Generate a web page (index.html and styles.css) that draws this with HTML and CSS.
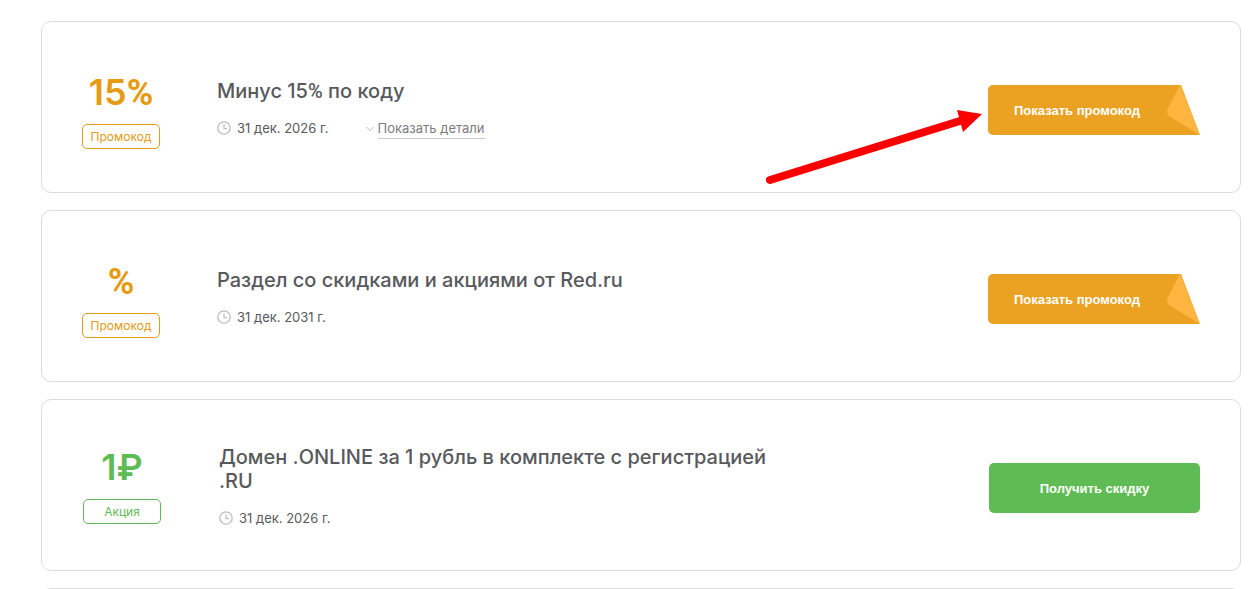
FILE: index.html
```html
<!DOCTYPE html>
<html lang="ru">
<head>
<meta charset="utf-8">
<title>Промокоды и акции</title>
<meta name="viewport" content="width=device-width, initial-scale=1">
<link rel="stylesheet" href="styles.css">
</head>
<body>
<svg class="sprite" aria-hidden="true">
  <symbol id="clock" viewBox="0 0 14 14">
    <circle cx="7" cy="7" r="6.2" fill="none" stroke="currentColor" stroke-width="1.3"/>
    <path d="M7 3.4V7.6H10" fill="none" stroke="currentColor" stroke-width="1.2"/>
  </symbol>
  <symbol id="fold" viewBox="0 0 34 50">
    <path d="M14 0 2 23Q-.5 28 3 31L34 50Z" fill="#ffb540"/>
  </symbol>
</svg>
<main class="offers">
  <article class="card">
    <div class="discount">
      <div class="amount">15<span class="percent">%</span></div>
      <div class="badge">Промокод</div>
    </div>
    <div class="info">
      <h2 class="title">Минус 15<span class="percent">%</span> по коду</h2>
      <div class="meta">
        <span class="date"><svg class="clock"><use href="#clock"/></svg>31 дек. 2026 г.</span>
        <button class="details" type="button"><svg class="chevron" viewBox="0 0 8 8"><path d="M.5 2 4 5.5 7.5 2" fill="none" stroke="currentColor"/></svg><span class="details-label">Показать детали</span></button>
      </div>
    </div>
    <button class="action promo" type="button"><span>Показать промокод</span><svg class="fold"><use href="#fold"/></svg></button>
    <svg class="arrow" viewBox="0 0 220 80" aria-hidden="true">
      <path d="M8 73 201 13" stroke="#fb0000" stroke-width="8" stroke-linecap="round"/>
      <path d="M195 3 220 7 201 25Z" fill="#fb0000"/>
    </svg>
  </article>
  <article class="card">
    <div class="discount">
      <div class="amount"><span class="percent">%</span></div>
      <div class="badge">Промокод</div>
    </div>
    <div class="info">
      <h2 class="title">Раздел со скидками и акциями от Red.ru</h2>
      <div class="meta">
        <span class="date"><svg class="clock"><use href="#clock"/></svg>31 дек. 2031 г.</span>
      </div>
    </div>
    <button class="action promo" type="button"><span>Показать промокод</span><svg class="fold"><use href="#fold"/></svg></button>
  </article>
  <article class="card deal">
    <div class="discount">
      <div class="amount">1₽</div>
      <div class="badge">Акция</div>
    </div>
    <div class="info">
      <h2 class="title">Домен .ONLINE за 1 рубль в комплекте с регистрацией .RU</h2>
      <div class="meta">
        <span class="date"><svg class="clock"><use href="#clock"/></svg>31 дек. 2026 г.</span>
      </div>
    </div>
    <button class="action" type="button">Получить скидку</button>
  </article>
  <article class="card"></article>
</main>
</body>
</html>
```
FILE: styles.css
```css
* {
  box-sizing: border-box;
}

body {
  margin: 0;
  background: #fff;
  color: #58595c;
  font-family: Inter, "Open Sans", sans-serif;
}

button {
  border: 0;
  padding: 0;
  background: none;
  font: inherit;
  cursor: pointer;
}

.sprite {
  display: none;
}

.offers {
  display: flex;
  flex-direction: column;
  gap: 17px;
  height: 100vh;
  padding: 21px 10px 0 41px;
  overflow: hidden;
}

.card {
  --accent: #e69b14;
  position: relative;
  display: flex;
  flex-shrink: 0;
  align-items: center;
  gap: 57px;
  min-height: 172px;
  padding: 6px 40px 0;
  border: 1px solid #dcdcdf;
  border-radius: 10px;
}

.deal {
  --accent: #5fbb53;
  gap: 58px;
  padding-left: 41px;
}

.discount {
  display: flex;
  flex-direction: column;
  gap: 11px;
  width: 78px;
  color: var(--accent);
  text-align: center;
}

.deal .discount {
  padding-bottom: 6px;
}

.amount {
  height: 42px;
  font-size: 36px;
  font-weight: 600;
  line-height: 42px;
}

.percent {
  font-family: Roboto, "Open Sans", sans-serif;
  line-height: 1;
}

.amount .percent {
  font-weight: 700;
}

.badge {
  border: 1px solid;
  border-radius: 5px;
  font-size: 12px;
  line-height: 23px;
}

.info {
  flex: 1;
}

.title {
  max-width: 560px;
  margin: 0 0 14px;
  font-size: 20px;
  font-weight: 500;
  line-height: 24px;
}

.meta {
  display: flex;
  gap: 37px;
  height: 24px;
  font-size: 13px;
  line-height: 22px;
}

.date {
  display: flex;
  align-items: center;
  gap: 6px;
  height: 22px;
}

.clock {
  width: 14px;
  height: 14px;
  color: #bcbcbf;
}

.details {
  display: flex;
  align-items: center;
  gap: 4px;
  height: 23px;
  color: #7c7c80;
}

.chevron {
  width: 8px;
  height: 8px;
  color: #b4b4b7;
}

.details-label {
  border-bottom: 1px solid #c8c8cb;
  line-height: 19px;
}

.action {
  flex: 0 0 212px;
  height: 50px;
  border-radius: 5px;
  background: var(--accent);
  color: #fff;
  font-family: "Liberation Sans", Arial, sans-serif;
  font-size: 13px;
  font-weight: 700;
}

.deal .action {
  flex-basis: 211px;
}

.promo {
  display: flex;
  align-items: center;
  justify-content: space-between;
  padding-left: 26px;
  border-bottom-right-radius: 0;
  background: #eba223;
  clip-path: polygon(0 0, 193px 0, 100% 100%, 0 100%);
}

.fold {
  width: 34px;
  height: 50px;
}

.arrow {
  position: absolute;
  top: 85px;
  right: 258px;
  width: 220px;
  height: 80px;
}
```
